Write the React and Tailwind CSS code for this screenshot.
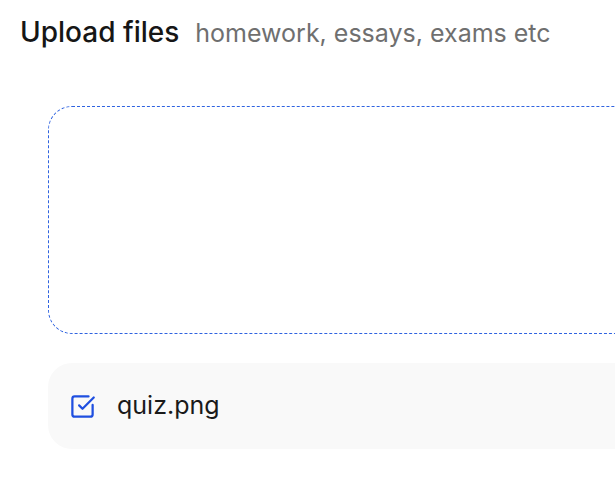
import React from "react";
import { SquareCheckBig } from "lucide-react";

const files = [{ name: "quiz.png" }];

const App = () => {
  return (
    <div className="h-[498px] w-[615px] overflow-hidden bg-white font-['Inter',sans-serif]">
      {/* Header */}
      <div className="flex items-baseline gap-4 px-5 pt-[15px]">
        <h2 className="text-[28px] font-medium leading-[34px] text-[#161616]">Upload files</h2>
        <span className="text-[25px] leading-[34px] text-[#6f6f6f]">homework, essays, exams etc</span>
      </div>

      {/* Drop zone + list */}
      <div className="ml-12 mt-[56px] w-[620px]">
        <div className="h-[228px] rounded-[24px] border border-dashed border-[#2f63e0]" />

        <div className="mt-[29px] flex flex-col gap-3">
          {files.map(({ name }) => (
            <div key={name} className="flex h-[86px] items-center gap-[21px] rounded-[24px] bg-[#f9f9f9] pl-[21px] pr-6">
              <SquareCheckBig className="h-[27px] w-[27px] text-[#1f4fe0]" strokeWidth={2} />
              <span className="text-[25px] text-[#1a1a1a]">{name}</span>
            </div>
          ))}
        </div>
      </div>
    </div>
  );
};

export default App;
